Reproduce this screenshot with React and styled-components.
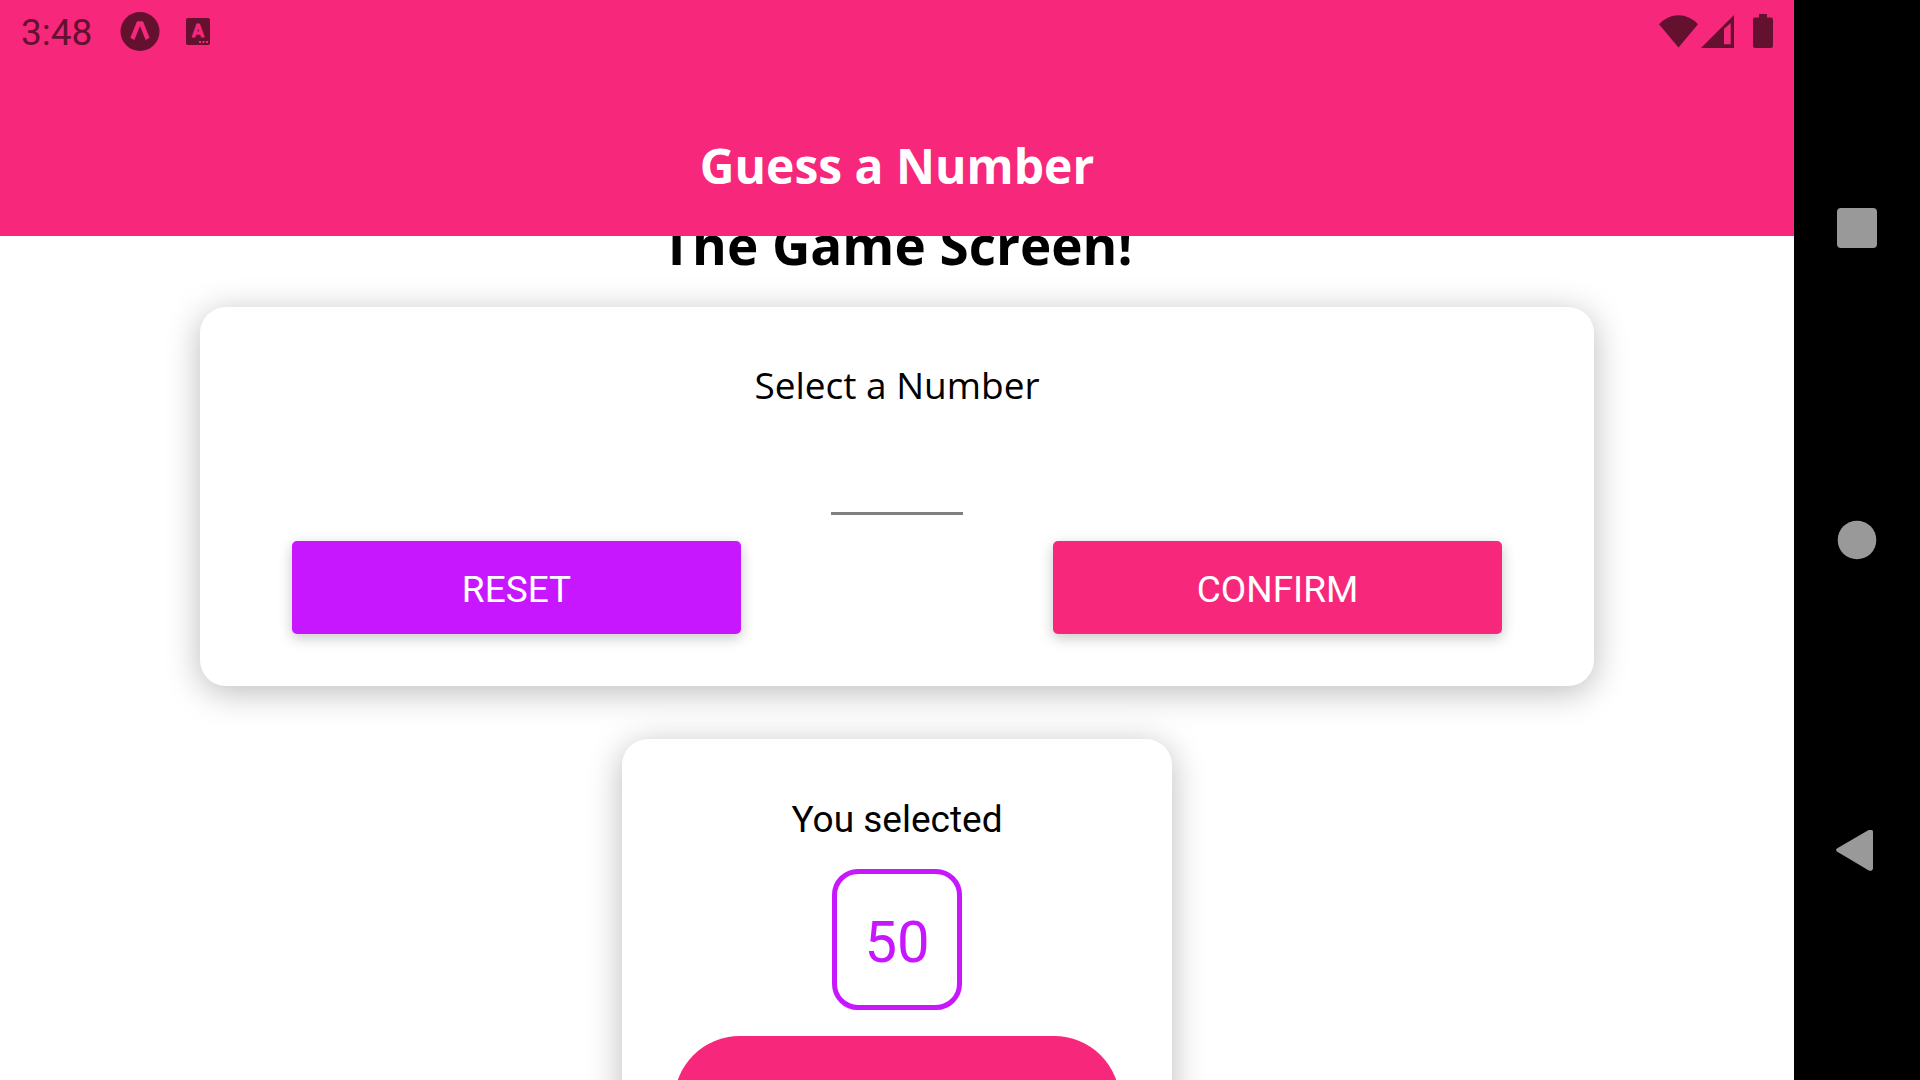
import React, { useState } from "react";
import styled, { createGlobalStyle } from "styled-components";

const PINK = "#f7287b";
const PURPLE = "#c717ff";
const INK = "#63112f";

const GlobalStyle = createGlobalStyle`
  * { box-sizing: border-box; }
  body { margin: 0; background: #fff; overflow: hidden; }
`;

const Device = styled.div`
  display: flex;
  height: 100vh;
  overflow: hidden;
  color: #000;
  font-family: Roboto, "Liberation Sans", sans-serif;
`;

const Screen = styled.div`
  flex: 1;
  min-width: 0;
  display: flex;
  flex-direction: column;
  background: #fff;
`;

const Top = styled.header`
  flex: none;
  background: ${PINK};
`;

const StatusBar = styled.div`
  display: flex;
  align-items: center;
  justify-content: space-between;
  height: 62px;
  padding: 0 21px;
  color: ${INK};
`;

const StatusGroup = styled.div`
  display: flex;
  align-items: center;
  gap: ${(p) => p.$gap}px;
`;

const Clock = styled.time`
  padding-top: 4px;
  font-size: 37px;
  line-height: 50px;
  margin-right: 2px;
`;

const Battery = styled.svg`
  margin-left: 16px;
`;

const AppTitle = styled.h1`
  margin: 0;
  padding: 72px 0 38px;
  color: #fff;
  font: 700 48px/64px "Open Sans", "Noto Sans", sans-serif;
  text-align: center;
`;

const Content = styled.main`
  flex: 1;
  min-height: 0;
  overflow: hidden;
  display: flex;
  flex-direction: column;
  align-items: center;
  padding: 0 200px;
`;

const ScreenTitle = styled.h2`
  flex: none;
  margin: -27px 0 26px;
  font: 700 53px/72px "Open Sans", "Noto Sans", sans-serif;
  text-align: center;
`;

const Card = styled.section`
  flex: none;
  display: flex;
  flex-direction: column;
  align-items: center;
  width: ${(p) => p.$width};
  max-width: 100%;
  padding: 52px;
  border-radius: 26px;
  background: #fff;
  box-shadow: 0 6px 34px rgba(0, 0, 0, 0.27);

  & + & { margin-top: 53px; }
`;

const Label = styled.label`
  font: 400 37px/52px "Open Sans", "Noto Sans", sans-serif;
`;

const NumberInput = styled.input`
  width: 132px;
  height: 78px;
  margin: 26px 0;
  padding: 0;
  border: 0;
  border-bottom: 3px solid #808080;
  outline: 0;
  background: transparent;
  font: 400 37px Roboto, sans-serif;
  text-align: center;
`;

const Actions = styled.div`
  display: flex;
  justify-content: space-between;
  align-self: stretch;
  padding: 0 40px;
`;

const ActionButton = styled.button`
  width: 449px;
  height: 93px;
  padding: 4px 0 0;
  border: 0;
  border-radius: 5px;
  background: ${(p) => p.$color};
  box-shadow: 0 4px 14px rgba(0, 0, 0, 0.22);
  color: #fff;
  font: 400 37px/50px Roboto, sans-serif;
  text-transform: uppercase;
`;

const Caption = styled.p`
  margin: 0 0 20px;
  font-size: 37px;
  line-height: 58px;
`;

const Chosen = styled.output`
  display: flex;
  align-items: center;
  justify-content: center;
  min-width: 130px;
  height: 141px;
  padding-top: 4px;
  margin-bottom: 26px;
  border: 5px solid ${PURPLE};
  border-radius: 26px;
  color: ${PURPLE};
  font-size: 58px;
`;

const StartButton = styled.button`
  align-self: stretch;
  height: 132px;
  border: 0;
  border-radius: 66px;
  background: ${PINK};
`;

const NavBar = styled.nav`
  flex: none;
  display: flex;
  flex-direction: column;
  width: 126px;
  padding: 72px 0;
  background: #000;
`;

const NavButton = styled.button`
  flex: 1;
  display: flex;
  align-items: center;
  justify-content: center;
  padding: 0;
  border: 0;
  background: transparent;
  color: #999;
`;

function ExpoIcon() {
  return (
    <svg width="40" height="40" viewBox="0 0 40 40" aria-hidden="true">
      <circle cx="20" cy="20.500" r="19.5" fill={INK} />
      <path
        d="M17.900 10.300h4.200c.6 0 1 .3 1.200.8l6.200 15.700-3.900 2.200L20 15l-5.700 14-3.900-2.200L16.700 11.100c.2-.5.6-.8 1.200-.8z"
        fill={PINK}
      />
    </svg>
  );
}

function KeyboardIcon() {
  return (
    <svg width="24" height="27" viewBox="0 0 24 27" aria-hidden="true">
      <rect width="24" height="27" rx="2" fill={INK} />
      <text
        x="12"
        y="19"
        fill={PINK}
        stroke={PINK}
        strokeWidth="0.8"
        strokeLinejoin="round"
        textAnchor="middle"
        fontFamily="Roboto, sans-serif"
        fontWeight="700"
        fontSize="18"
      >
        A
      </text>
      <path d="M13 23h2v2h-2zM16.5 23h2v2h-2zM20 23h2v2h-2z" fill={PINK} />
    </svg>
  );
}

function App() {
  const [value, setValue] = useState("");
  return (
    <>
      <GlobalStyle />
      <Device>
        <Screen>
          <Top>
            <StatusBar>
              <StatusGroup $gap={26}>
                <Clock>3:48</Clock>
                <ExpoIcon />
                <KeyboardIcon />
              </StatusGroup>
              <StatusGroup $gap={3}>
                <svg width="39" height="33" viewBox="0 0 39 33" aria-hidden="true">
                  <path d="M0 9.3A25.6 25.6 0 0 1 39 9.3L19.5 32.5z" fill={INK} />
                </svg>
                <svg width="33" height="33" viewBox="0 0 33 33" aria-hidden="true">
                  <path
                    fillRule="evenodd"
                    d="M0 33 33 0v33zM23 14v15.3h6.7V8z"
                    fill={INK}
                  />
                </svg>
                <Battery width="20" height="34" viewBox="0 0 20 34" aria-hidden="true">
                  <path
                    d="M6 0h8v3.5h4a2 2 0 0 1 2 2V32a2 2 0 0 1-2 2H2a2 2 0 0 1-2-2V5.5a2 2 0 0 1 2-2h4z"
                    fill={INK}
                  />
                </Battery>
              </StatusGroup>
            </StatusBar>
            <AppTitle>Guess a Number</AppTitle>
          </Top>
          <Content>
            <ScreenTitle>The Game Screen!</ScreenTitle>
            <Card $width="100%">
              <Label htmlFor="number">Select a Number</Label>
              <NumberInput
                id="number"
                inputMode="numeric"
                maxLength={2}
                value={value}
                onChange={(e) => setValue(e.target.value.replace(/\D/g, ""))}
              />
              <Actions>
                <ActionButton type="button" $color={PURPLE} onClick={() => setValue("")}>
                  Reset
                </ActionButton>
                <ActionButton type="button" $color={PINK}>
                  Confirm
                </ActionButton>
              </Actions>
            </Card>
            <Card $width="550px">
              <Caption>You selected</Caption>
              <Chosen>50</Chosen>
              <StartButton type="button" aria-label="Start game" />
            </Card>
          </Content>
        </Screen>
        <NavBar aria-label="System">
          <NavButton type="button" aria-label="Overview">
            <svg width="40" height="40" viewBox="0 0 40 40">
              <rect width="40" height="40" rx="4" fill="currentColor" />
            </svg>
          </NavButton>
          <NavButton type="button" aria-label="Home">
            <svg width="40" height="40" viewBox="0 0 40 40">
              <circle cx="20" cy="20" r="19.3" fill="currentColor" />
            </svg>
          </NavButton>
          <NavButton type="button" aria-label="Back">
            <svg width="42" height="44" viewBox="0 1 42 44">
              <path
                d="M1.3 19.2 32.8.9C35-.2 37 .9 37 3v36c0 2.400-2 3.500-4.200 2.400L1.3 22.800C-.3 21.800-.3 20.200 1.300 19.200z"
                fill="currentColor"
              />
            </svg>
          </NavButton>
        </NavBar>
      </Device>
    </>
  );
}

export default App;
